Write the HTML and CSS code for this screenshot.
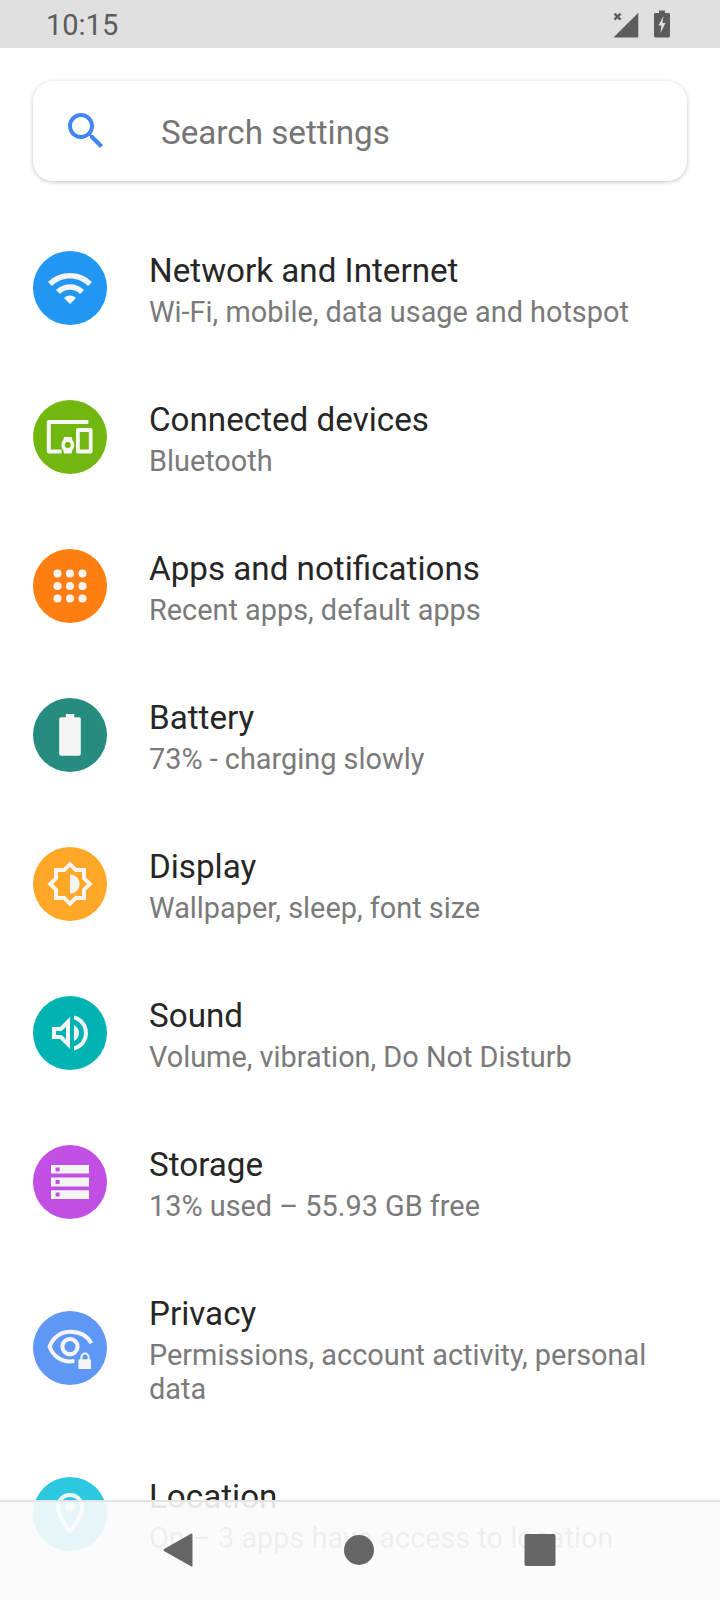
FILE: index.html
```html
<!DOCTYPE html>
<html lang="en">
<head>
<meta charset="utf-8">
<title>Settings</title>
<link rel="stylesheet" href="styles.css">
</head>
<body>
<div class="phone">
  <header class="status">
    <span class="time">10:15</span>
    <div class="status-icons">
      <svg class="sig" viewBox="0 0 26 27"><path d="M25.3 1.7V26.5H.5z"/><path class="x" d="M1.5 2.6l6 6M7.5 2.6l-6 6"/></svg>
      <svg class="bat" viewBox="0 0 16 28"><path fill-rule="evenodd" d="M5 .5h6v2.6h3.600a1.400 1.400 0 0 1 1.400 1.400v21.600a1.400 1.400 0 0 1-1.400 1.400H1.400A1.400 1.400 0 0 1 0 26.100V4.500a1.400 1.400 0 0 1 1.400-1.400H5zM9.600 6 4.400 15.600h3l-1 7.400 5.200-10H8.400z"/></svg>
    </div>
  </header>

  <div class="search">
    <svg class="search-icon" viewBox="0 0 24 24"><path d="M15.5 14h-.79l-.28-.27C15.41 12.59 16 11.11 16 9.5 16 5.91 13.09 3 9.5 3S3 5.91 3 9.5 5.91 16 9.5 16c1.61 0 3.09-.59 4.23-1.57l.27.28v.79l5 4.99L20.49 19l-4.99-5zm-6 0C7.01 14 5 11.99 5 9.5S7.01 5 9.5 5 14 7.01 14 9.5 11.99 14 9.5 14z"/></svg>
    <span class="search-text">Search settings</span>
  </div>

  <main class="list">
    <div class="row">
      <div class="badge c-network"><svg viewBox="0 0 24 24"><path d="M1 9l2 2c4.97-4.97 13.03-4.97 18 0l2-2C16.93 2.93 7.08 2.93 1 9zm8 8l3 3 3-3c-1.65-1.66-4.34-1.66-6 0zm-4-4l2 2c2.76-2.76 7.24-2.76 10 0l2-2C15.14 9.14 8.87 9.14 5 13z"/></svg></div>
      <div class="text"><div class="title">Network and Internet</div><div class="sub">Wi-Fi, mobile, data usage and hotspot</div></div>
    </div>
    <div class="row">
      <div class="badge c-devices"><svg viewBox="0 0 24 24"><path fill-rule="evenodd" d="M21.200 3.500v2H2.400v12.700h5.400v2H1.400a1 1 0 0 1-1-1V4.500a1 1 0 0 1 1-1zM16 7.500h6.300a1 1 0 0 1 1 1v10.700a1 1 0 0 1-1 1H16a1 1 0 0 1-1-1V8.500a1 1 0 0 1 1-1zm.9 2v8.700h4.500V9.500zM9 12h3.800l.4 1.500a3.800 3.800 0 0 1 0 5l-.4 1.700H9l-.4-1.700a3.800 3.800 0 0 1 0-5zm1.900 2.500a1.500 1.500 0 1 0 0 3 1.500 1.500 0 0 0 0-3z"/></svg></div>
      <div class="text"><div class="title">Connected devices</div><div class="sub">Bluetooth</div></div>
    </div>
    <div class="row">
      <div class="badge c-apps"><svg viewBox="0 0 24 24"><circle cx="5.750" cy="5.750" r="2"/><circle cx="12" cy="5.750" r="2"/><circle cx="18.250" cy="5.750" r="2"/><circle cx="5.750" cy="12" r="2"/><circle cx="12" cy="12" r="2"/><circle cx="18.250" cy="12" r="2"/><circle cx="5.750" cy="18.250" r="2"/><circle cx="12" cy="18.250" r="2"/><circle cx="18.250" cy="18.250" r="2"/></svg></div>
      <div class="text"><div class="title">Apps and notifications</div><div class="sub">Recent apps, default apps</div></div>
    </div>
    <div class="row">
      <div class="badge c-battery"><svg viewBox="0 0 24 24"><path d="M9.900 1.500h4.200v1.600h2.400a.9.9 0 0 1 .9.9v17.500a.9.9 0 0 1-.9.9H7.500a.9.9 0 0 1-.9-.9V4a.9.9 0 0 1 .9-.9h2.400z"/></svg></div>
      <div class="text"><div class="title">Battery</div><div class="sub">73% - charging slowly</div></div>
    </div>
    <div class="row">
      <div class="badge c-display"><svg viewBox="0 0 24 24"><path d="M20 15.310L23.310 12 20 8.690V4h-4.690L12 .69 8.690 4H4v4.690L.69 12 4 15.310V20h4.690L12 23.310 15.310 20H20v-4.690zm-2-.83V18h-3.520L12 20.480 9.520 18H6v-3.520L3.520 12 6 9.520V6h3.520L12 3.520 14.480 6H18v3.520L20.480 12 18 14.480zM12 7.200v9.600c2.650 0 4.800-2.150 4.800-4.800S14.650 7.200 12 7.200z"/></svg></div>
      <div class="text"><div class="title">Display</div><div class="sub">Wallpaper, sleep, font size</div></div>
    </div>
    <div class="row">
      <div class="badge c-sound"><svg viewBox="0 0 24 24"><path d="M3 9v6h4l5 5V4L7 9H3zm7-.17v6.340L7.830 13H5v-2h2.830L10 8.830zM16.500 12c0-1.770-1.020-3.290-2.500-4.030v8.050c1.480-.73 2.500-2.250 2.500-4.020zM14 3.230v2.060c2.890.86 5 3.540 5 6.710s-2.110 5.850-5 6.710v2.060c4.010-.91 7-4.490 7-8.770 0-4.280-2.990-7.860-7-8.770z"/></svg></div>
      <div class="text"><div class="title">Sound</div><div class="sub">Volume, vibration, Do Not Disturb</div></div>
    </div>
    <div class="row">
      <div class="badge c-storage"><svg viewBox="0 0 24 24"><path fill-rule="evenodd" d="M2.500 3.500h19v4.300h-19zm2.300 1.200v2h2v-2zM2.500 9.800h19v4.400h-19zm2.300 1.200v2h2v-2zM2.500 16.100h19v4.400h-19zm2.300 1.200v2h2v-2z"/></svg></div>
      <div class="text"><div class="title">Storage</div><div class="sub">13% used – 55.93 GB free</div></div>
    </div>
    <div class="row">
      <div class="badge c-privacy"><svg viewBox="0 0 24 24"><path class="line" d="M22.700 9.600C20.600 6 16.600 3.900 12 3.900 7.200 3.900 3.400 6.900 1.800 11.300 3.400 15.700 7.200 18.700 12 18.700c.8 0 1.500-.1 2.200-.2"/><circle class="line" cx="12" cy="11.300" r="3.800"/><path fill-rule="evenodd" d="M17.200 17.700v-1.100a2.300 2.300 0 0 1 4.600 0v1.100h.7v4.800h-6.300v-4.800zm1-.1h2.600v-1a1.300 1.300 0 0 0-2.600 0z"/></svg></div>
      <div class="text"><div class="title">Privacy</div><div class="sub">Permissions, account activity, personal data</div></div>
    </div>
    <div class="row">
      <div class="badge c-location"><svg viewBox="0 0 24 24"><path class="line" d="M12 2.500C8.400 2.500 6 5.200 6 8.800c0 3.400 3.200 8.800 6 11.700 2.800-2.900 6-8.300 6-11.700 0-3.600-2.400-6.300-6-6.300z"/><circle cx="12" cy="8.500" r="2.500"/></svg></div>
      <div class="text"><div class="title">Location</div><div class="sub">On – 3 apps have access to location</div></div>
    </div>
  </main>

  <nav class="nav">
    <svg class="nav-btn" viewBox="0 0 48 48"><path d="M38.500 8.500v31a1 1 0 0 1-1.600.8L10 25a1.300 1.300 0 0 1 0-2L36.900 7.700a1 1 0 0 1 1.600.8z"/></svg>
    <svg class="nav-btn" viewBox="0 0 48 48"><circle cx="24" cy="24" r="15"/></svg>
    <svg class="nav-btn" viewBox="0 0 48 48"><rect x="8.500" y="8" width="31" height="32" rx="2"/></svg>
  </nav>
</div>
</body>
</html>
```

FILE: styles.css
```css
* { box-sizing: border-box; }
html, body { margin: 0; padding: 0; }
body { background: #fff; font-family: Roboto, "Liberation Sans", sans-serif; }
.phone { position: relative; width: 720px; height: 1600px; overflow: hidden; background: #fff; }

.status { height: 48px; background: #e0e0e0; display: flex; align-items: center; justify-content: space-between; padding: 0 50px 0 46px; }
.time { font-size: 29px; color: #5c5c5c; line-height: 48px; padding-top: 1px; }
.status-icons { display: flex; align-items: center; gap: 15px; }
.sig { width: 26px; height: 27px; fill: #5c5c5c; }
.sig .x { fill: none; stroke: #5c5c5c; stroke-width: 2.4; }
.bat { width: 16px; height: 28px; fill: #5c5c5c; }

.search { margin: 33px 33px 0; height: 100px; border-radius: 20px; background: #fff; box-shadow: 0 1px 4px rgba(0,0,0,.24); display: flex; align-items: center; padding-left: 29px; gap: 51px; }
.search-icon { width: 48px; height: 48px; fill: #4285f4; flex: none; }
.search-text { font-size: 33.2px; color: #757575; padding-top: 3px; }

.list { margin-top: 32.5px; }
.row { display: flex; align-items: center; padding: 34px 33px; }
.badge { width: 74px; height: 74px; border-radius: 50%; flex: none; display: flex; align-items: center; justify-content: center; margin-right: 42px; }
.badge svg { width: 48px; height: 48px; fill: #f5f5f5; }
.badge .line { fill: none; stroke: #f5f5f5; stroke-width: 2; }
.text { flex: 1; min-width: 0; padding-top: 1px; }
.title { font-size: 33.2px; line-height: 44px; color: #262626; }
.sub { font-size: 28.86px; line-height: 34px; color: #7a7a7a; margin-top: 2px; }

.c-network { background: #2196f3; }
.c-devices { background: #72b70f; }
.c-apps { background: #ff7e11; }
.c-battery { background: #268c80; }
.c-display { background: #ffa726; }
.c-sound { background: #00b3b3; }
.c-storage { background: #c24fe3; }
.c-privacy { background: #5e97f6; }
.c-location { background: #2cc8df; }

.nav { position: absolute; left: 0; right: 0; bottom: 0; height: 100px; background: rgba(251,251,251,.9); border-top: 2px solid rgba(225,225,225,.95); display: flex; align-items: center; justify-content: center; gap: 133px; padding: 0 2px 2px 0; }
.nav-btn { width: 48px; height: 48px; fill: #666; flex: none; }
```
